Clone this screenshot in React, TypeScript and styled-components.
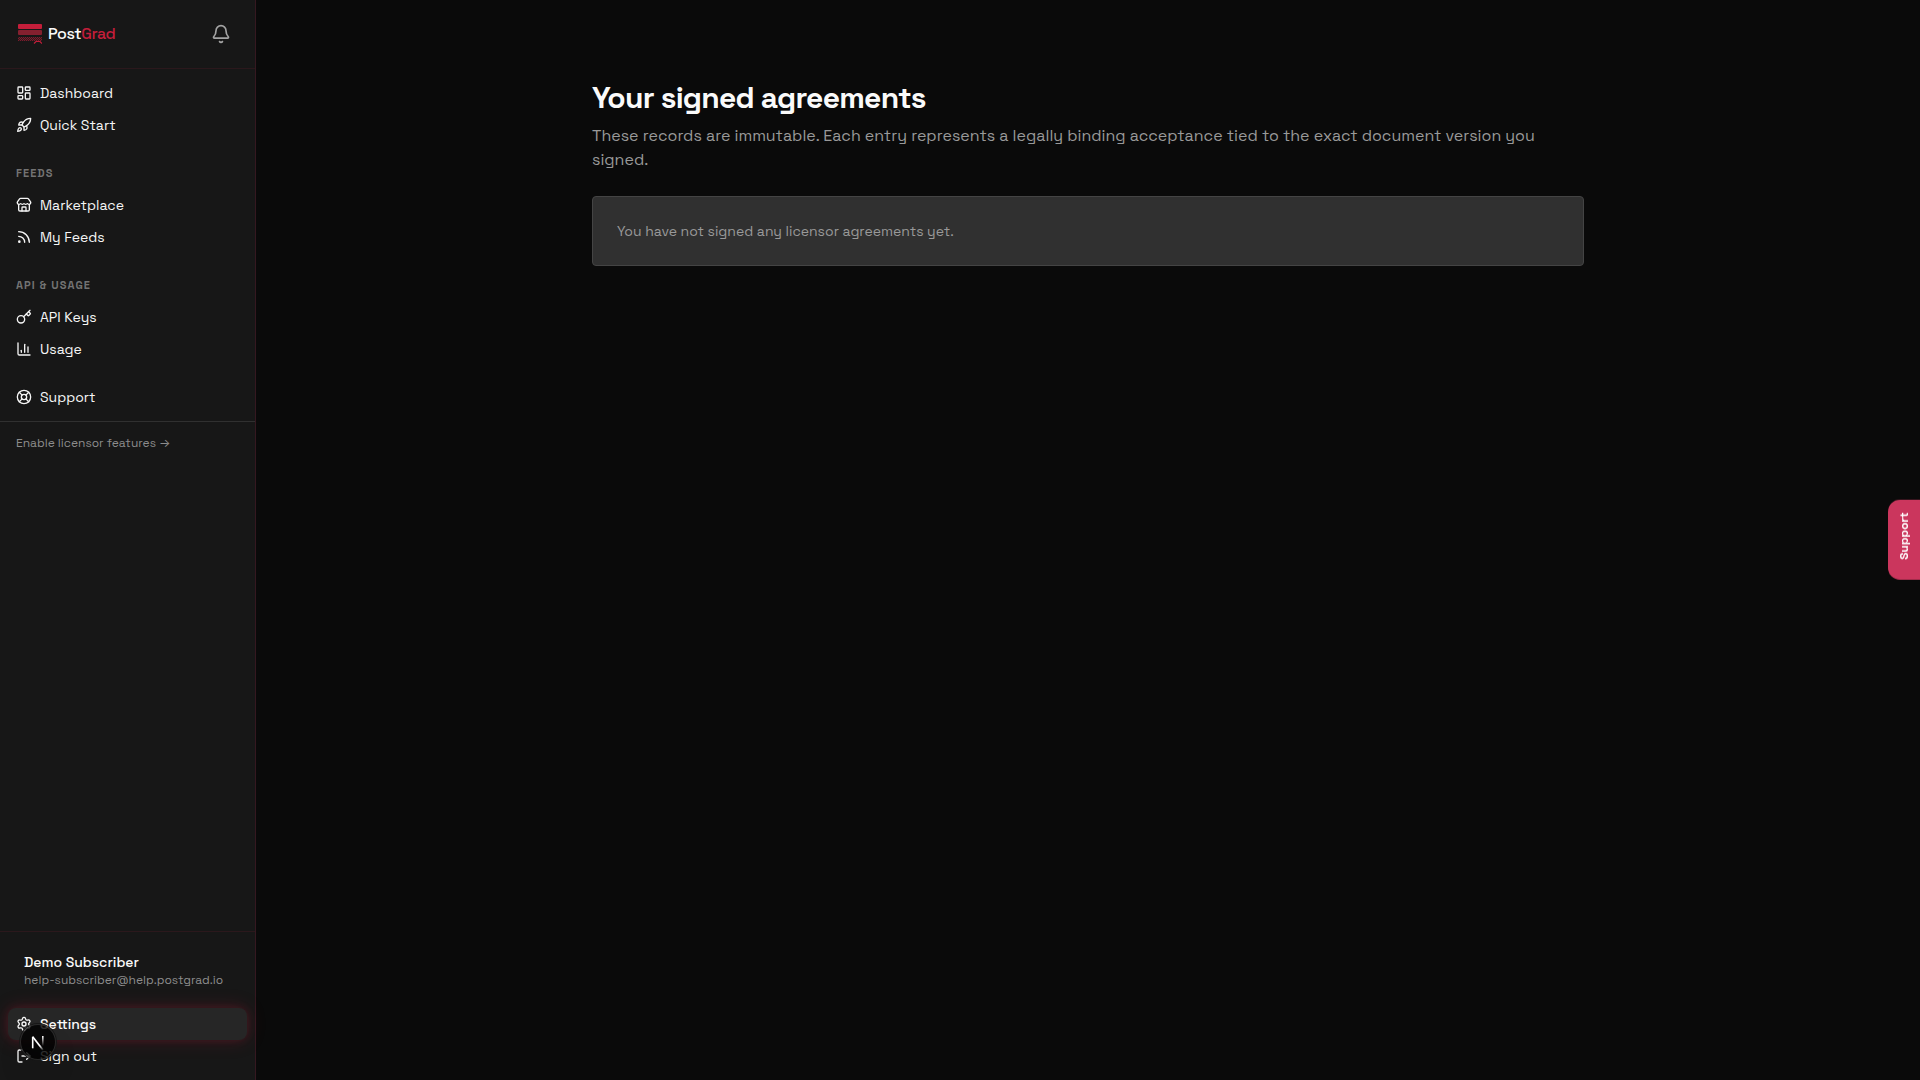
import React from "react";
import styled, { createGlobalStyle, css } from "styled-components";
import {
  Bell,
  ChartColumn,
  Key,
  LayoutDashboard,
  LifeBuoy,
  LogOut,
  Rocket,
  Rss,
  Settings,
  Store,
} from "lucide-react";

const GlobalStyle = createGlobalStyle`
  *, *::before, *::after { box-sizing: border-box; }
  body {
    margin: 0;
    background: #0a0a0a;
    color: #fafafa;
    font-family: "Space Grotesk", Inter, "Liberation Sans", sans-serif;
    font-size: 14px;
    line-height: 20px;
    -webkit-font-smoothing: antialiased;
  }
  h1, h2, p, ul { margin: 0; padding: 0; }
  ul { list-style: none; }
  button { font: inherit; border: 0; background: none; cursor: pointer; }
`;

const Shell = styled.div`
  display: flex;
  min-height: 100vh;
`;

const Sidebar = styled.aside`
  position: sticky;
  top: 0;
  display: flex;
  flex-direction: column;
  flex: 0 0 256px;
  height: 100vh;
  background: #171717;
  border-right: 1px solid #351820;
`;

const Header = styled.header`
  display: flex;
  align-items: center;
  justify-content: space-between;
  padding: 16px;
  border-bottom: 1px solid #2b181c;
`;

const Brand = styled.a`
  display: flex;
  align-items: center;
  gap: 6px;
  color: #fafafa;
  font-size: 16px;
  font-weight: 500;
  letter-spacing: -0.025em;
  line-height: 24px;
  text-decoration: none;
`;

const BrandAccent = styled.span`
  color: #c41e3a;
`;

const BellButton = styled.button`
  display: flex;
  padding: 8px;
  color: #a3a3a3;
`;

const Nav = styled.nav`
  display: flex;
  flex-direction: column;
  gap: 16px;
  padding: 8px;
  border-bottom: 1px solid #303030;
`;

const GroupLabel = styled.h2`
  padding: 0 8px;
  color: #737373;
  font-size: 11px;
  font-weight: 600;
  letter-spacing: 0.1em;
  line-height: 32px;
  text-transform: uppercase;
`;

const rowStyle = css`
  display: flex;
  align-items: center;
  gap: 8px;
  width: 100%;
  height: 32px;
  padding: 0 8px;
  border-radius: 8px;
  color: #f5f5f5;
  text-align: left;
  text-decoration: none;
`;

const NavLink = styled.a<{ $active?: boolean }>`
  ${rowStyle}
  ${({ $active }) =>
    $active &&
    css`
      background: #262626;
      color: #fafafa;
      font-weight: 500;
      box-shadow: 0 0 8px rgba(196, 30, 58, 0.2), 0 0 20px rgba(196, 30, 58, 0.2);
    `}
`;

const NavButton = styled.button`
  ${rowStyle}
`;

const LicensorLink = styled.a`
  padding: 12px 16px;
  color: #8c8c8c;
  font-size: 12px;
  line-height: 18px;
  text-decoration: none;
`;

const Arrow = styled.span`
  font-family: Inter, sans-serif;
`;

const Footer = styled.footer`
  margin-top: auto;
  padding: 8px;
  border-top: 1px solid #2b181c;
`;

const Account = styled.div`
  padding: 12px 16px 20px;
`;

const AccountName = styled.p`
  font-weight: 500;
`;

const AccountEmail = styled.p`
  color: #8c8c8c;
  font-size: 12px;
  line-height: 16px;
`;

const Main = styled.main`
  flex: 1;
  min-width: 0;
  padding: 80px 0;
`;

const Content = styled.div`
  max-width: 1024px;
  margin: 0 auto;
  padding: 0 16px;
`;

const Title = styled.h1`
  font-size: 30px;
  font-weight: 700;
  letter-spacing: -0.025em;
  line-height: 36px;
`;

const Lead = styled.p`
  margin-top: 8px;
  color: #999999;
  font-size: 16px;
  line-height: 24px;
`;

const Card = styled.section`
  margin-top: 24px;
  padding: 24px;
  background: #303030;
  border: 1px solid #444444;
  border-radius: 4px;
  color: #999999;
`;

const SupportTab = styled.button`
  position: fixed;
  top: 50%;
  right: 0;
  padding: 20px 8px 12px;
  background: #cb365d;
  border-radius: 0 12px 12px 0;
  color: #ffffff;
  font-size: 12px;
  font-weight: 600;
  line-height: 16px;
  writing-mode: vertical-rl;
  transform: translateY(-50%) rotate(180deg);
`;

const DevBadge = styled.button`
  position: fixed;
  bottom: 20px;
  left: 20px;
  width: 36px;
  height: 36px;
  padding: 0;
  background: rgba(0, 0, 0, 0.8);
  border-radius: 50%;
  box-shadow: 0 0 0 1px #171717, inset 0 0 0 1px rgba(255, 255, 255, 0.14),
    0 16px 32px -8px rgba(0, 0, 0, 0.24);
  backdrop-filter: blur(48px);
`;

const Logo = () => (
  <svg width="26" height="20" viewBox="0 0 26 20" aria-hidden="true">
    <defs>
      <pattern id="dither" width="2" height="2" patternUnits="userSpaceOnUse">
        <rect width="2" height="2" fill="#32171c" />
        <rect width="1" height="1" fill="#7a1c2c" />
        <rect x="1" y="1" width="1" height="1" fill="#7a1c2c" />
      </pattern>
    </defs>
    <rect x="2" y="0" width="24" height="5" rx="1" fill="#c41e3a" />
    <rect x="2" y="6" width="24" height="5" rx="1" fill="#84202f" />
    <rect x="2" y="13" width="24" height="4" fill="url(#dither)" />
    <path d="M18 19.500l2-2h4l2 2" fill="none" stroke="#c41e3a" strokeWidth="1.2" />
  </svg>
);

const groups = [
  {
    items: [
      { label: "Dashboard", Icon: LayoutDashboard },
      { label: "Quick Start", Icon: Rocket },
    ],
  },
  {
    title: "Feeds",
    items: [
      { label: "Marketplace", Icon: Store },
      { label: "My Feeds", Icon: Rss },
    ],
  },
  {
    title: "API & Usage",
    items: [
      { label: "API Keys", Icon: Key },
      { label: "Usage", Icon: ChartColumn },
    ],
  },
  { items: [{ label: "Support", Icon: LifeBuoy }] },
];

export default function App() {
  return (
    <>
      <GlobalStyle />
      <Shell>
        <Sidebar>
          <Header>
            <Brand href="#">
              <Logo />
              <span>
                Post<BrandAccent>Grad</BrandAccent>
              </span>
            </Brand>
            <BellButton type="button" aria-label="Notifications">
              <Bell size={20} />
            </BellButton>
          </Header>
          <Nav>
            {groups.map((group, index) => (
              <div key={index}>
                {group.title && <GroupLabel>{group.title}</GroupLabel>}
                <ul>
                  {group.items.map(({ label, Icon }) => (
                    <li key={label}>
                      <NavLink href="#">
                        <Icon size={16} />
                        {label}
                      </NavLink>
                    </li>
                  ))}
                </ul>
              </div>
            ))}
          </Nav>
          <LicensorLink href="#">
            Enable licensor features <Arrow>→</Arrow>
          </LicensorLink>
          <Footer>
            <Account>
              <AccountName>Demo Subscriber</AccountName>
              <AccountEmail>help-subscriber@help.postgrad.io</AccountEmail>
            </Account>
            <NavLink href="#" $active>
              <Settings size={16} />
              Settings
            </NavLink>
            <NavButton type="button">
              <LogOut size={16} />
              Sign out
            </NavButton>
          </Footer>
        </Sidebar>
        <Main>
          <Content>
            <Title>Your signed agreements</Title>
            <Lead>
              These records are immutable. Each entry represents a legally binding
              acceptance tied to the exact document version you signed.
            </Lead>
            <Card>
              <p>You have not signed any licensor agreements yet.</p>
            </Card>
          </Content>
        </Main>
      </Shell>
      <SupportTab type="button">Support</SupportTab>
      <DevBadge type="button" aria-label="Open developer tools">
        <svg width="36" height="36" viewBox="0 0 36 36" fill="none">
          <defs>
            <linearGradient id="diagonal" x1="18" y1="18" x2="24" y2="26" gradientUnits="userSpaceOnUse">
              <stop stopColor="#fff" />
              <stop offset="0.4" stopColor="#fff" />
              <stop offset="1" stopColor="#fff" stopOpacity="0" />
            </linearGradient>
            <linearGradient id="stem" x1="23" y1="12" x2="23" y2="22" gradientUnits="userSpaceOnUse">
              <stop stopColor="#fff" />
              <stop offset="1" stopColor="#fff" stopOpacity="0" />
            </linearGradient>
          </defs>
          <path d="M12.700 24.300V12.700" stroke="#fff" strokeWidth="1.6" />
          <path d="M12.700 12.700L23 26" stroke="url(#diagonal)" strokeWidth="1.7" />
          <path d="M22.800 12v10" stroke="url(#stem)" strokeWidth="1.6" />
        </svg>
      </DevBadge>
    </>
  );
}
